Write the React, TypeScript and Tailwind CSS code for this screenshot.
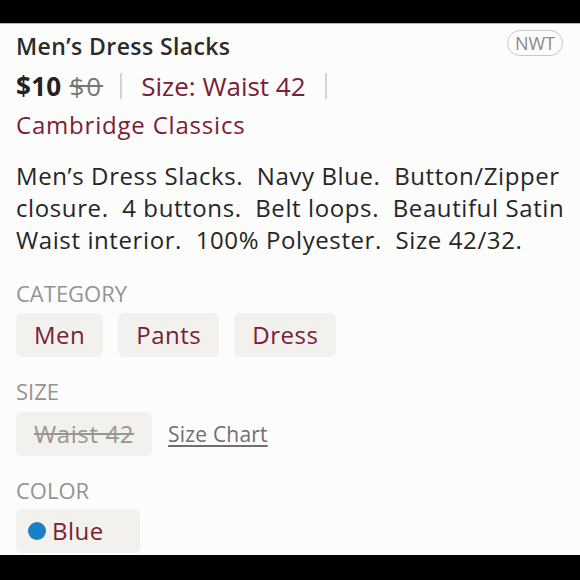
import React from 'react';

const maroon = 'text-[#7a2034]';

const Chip = ({ children }: { children: React.ReactNode }) => (
  <div className="flex h-[44px] items-center rounded-md bg-[#f3f1ee] px-[18px]">{children}</div>
);

const Label = ({ children, className = '' }: { children: React.ReactNode; className?: string }) => (
  <div className={`text-[22px] leading-[26px] text-[#959390] ${className}`}>{children}</div>
);

const App = () => {
  return (
    <div className="flex h-[580px] w-[580px] flex-col overflow-hidden bg-black font-['Open_Sans',sans-serif]">
      <div className="h-[24px] shrink-0 border-b border-[#b5b5b5]" />
      <div className="h-[531px] shrink-0 overflow-hidden bg-[#fcfcfc] px-[16px]">
        <div className="flex items-start justify-between pt-[6px]">
          <h1 className="mt-[1px] text-[23px] leading-[30px] font-semibold tracking-[0.4px] text-[#2b2b2b]">
            Men’s Dress Slacks
          </h1>
          <span className="mr-[1px] rounded-full border border-[#c9c9c9] px-[7px] text-[18px] leading-[24px] text-[#8a8a86]">
            NWT
          </span>
        </div>

        <div className="mt-[9px] flex items-center text-[26px] leading-[32px]">
          <span className="font-bold tracking-[0.3px] text-[#222]">$10</span>
          <span className="ml-[8px] tracking-[2px] text-[#777] line-through">$0</span>
          <span className="mr-[19px] ml-[17px] h-[26px] w-[2px] bg-[#d3d3d3]" />
          <span className={maroon}>Size: Waist 42</span>
          <span className="mx-[19px] h-[26px] w-[2px] bg-[#d3d3d3]" />
        </div>

        <div className={`mt-[7px] text-[24px] leading-[32px] tracking-[0.8px] ${maroon}`}>Cambridge Classics</div>

        <p className="mt-[19px] -mr-[16px] text-[24px] leading-[32px] tracking-[0.6px] whitespace-pre-wrap text-[#262626]">
          {'Men’s Dress Slacks.  Navy Blue.  Button/Zipper closure.  4 buttons.  Belt loops.  Beautiful Satin Waist interior.  100% Polyester.  Size 42/32.'}
        </p>

        <Label className="mt-[24px]">CATEGORY</Label>
        <div className="mt-[7px] flex gap-[15px]">
          {['Men', 'Pants', 'Dress'].map((c) => (
            <Chip key={c}>
              <span className={`text-[24px] leading-[32px] tracking-[0.5px] ${maroon}`}>{c}</span>
            </Chip>
          ))}
        </div>

        <Label className="mt-[21px]">SIZE</Label>
        <div className="mt-[8px] flex items-center gap-[16px]">
          <Chip>
            <span className="text-[24px] leading-[32px] tracking-[0.6px] text-[#999691] line-through">Waist 42</span>
          </Chip>
          <span className="text-[21px] leading-[28px] tracking-[0.2px] text-[#6f6f6f] underline underline-offset-[3px]">
            Size Chart
          </span>
        </div>

        <Label className="mt-[21px]">COLOR</Label>
        <div className="mt-[6px] flex">
          <div className="flex h-[44px] items-center rounded-md bg-[#f3f1ee] pr-[36px] pl-[12px]">
            <span className="mr-[6px] h-[18px] w-[18px] rounded-full bg-[#1a7fc4]" />
            <span className={`text-[24px] leading-[32px] tracking-[0.5px] ${maroon}`}>Blue</span>
          </div>
        </div>
      </div>
    </div>
  );
};

export default App;
